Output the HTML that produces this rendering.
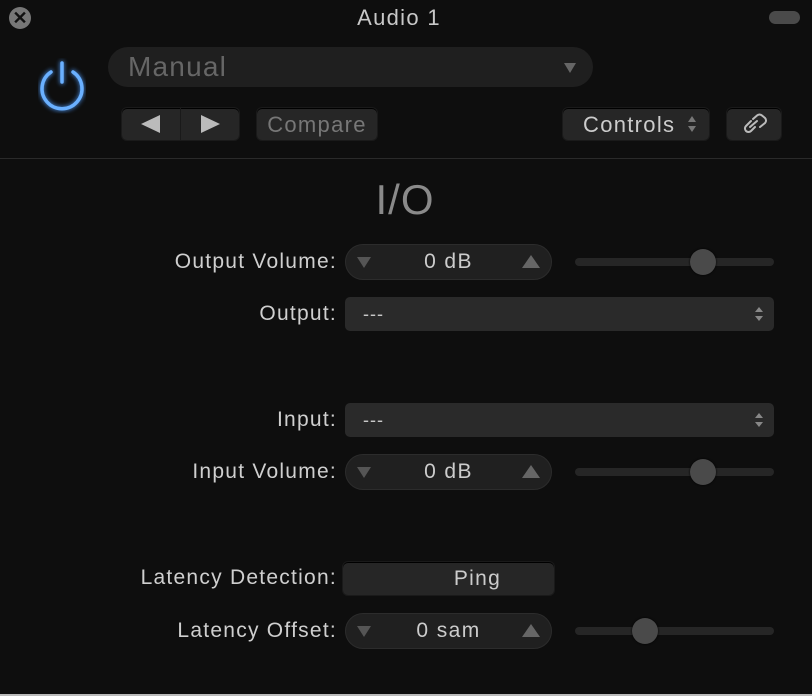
<!DOCTYPE html><html><head><style>
body{margin:0;width:812px;height:696px;background:#0e0e0e;font-family:"Liberation Sans",sans-serif;overflow:hidden;position:relative;letter-spacing:1px}
.a{position:absolute}
.lbl{position:absolute;right:476px;color:#cfcfcf;font-size:21px;line-height:24px;white-space:nowrap;letter-spacing:1.25px;margin-right:-1px}
.btn{position:absolute;background:#262626;border-radius:5px;box-shadow:0 1px 0 #000 inset,0 0 0 1px #1a1a1a}
.step{position:absolute;left:345px;width:207px;height:36px;background:#202020;border-radius:18px;border:1px solid #2c2c2c;box-sizing:border-box;color:#ccc;font-size:21px;text-align:center;line-height:34px;letter-spacing:1.4px}
.step .d{position:absolute;left:11px;top:12px;border-left:7px solid transparent;border-right:7px solid transparent;border-top:11px solid #555}
.step .u{position:absolute;right:11px;top:10px;border-left:9px solid transparent;border-right:9px solid transparent;border-bottom:13px solid #666}
.track{position:absolute;left:575px;width:199px;height:8px;background:#262626;border-radius:4px}
.knob{position:absolute;width:26px;height:26px;border-radius:50%;background:#4a4a4a;box-shadow:0 0 2px #000}
.pop{position:absolute;left:345px;width:429px;height:34px;background:#2a2a2a;border-radius:5px;color:#c8c8c8;font-size:18px;line-height:34px;padding-left:18px;box-sizing:border-box}
.ud{position:absolute;right:10px;top:9px;width:10px}
</style></head><body>
<div class="a" style="left:9px;top:7px;width:22px;height:22px;border-radius:50%;background:#777;color:#111;font-size:18px;font-weight:bold;text-align:center;line-height:22px;letter-spacing:0">✕</div>
<div class="a" style="left:0;width:798px;top:5px;text-align:center;color:#c8c8c8;font-size:22px;line-height:26px;letter-spacing:1.3px">Audio 1</div>
<div class="a" style="left:769px;top:11px;width:31px;height:13px;border-radius:7px;background:#4a4a4a"></div>
<svg class="a" style="left:34px;top:58px" width="56" height="58" viewBox="0 0 56 58"><defs><filter id="g"><feGaussianBlur stdDeviation="2"/></filter></defs><g stroke="#4f9dff" stroke-width="5" fill="none" stroke-linecap="round" filter="url(#g)" opacity=".7"><path d="M17 14A20 20 0 1 0 39 14"/><path d="M28 5V24"/></g><g stroke="#6ab0ff" stroke-width="3.5" fill="none" stroke-linecap="round"><path d="M17 14A20 20 0 1 0 39 14"/><path d="M28 5V24"/></g></svg>
<div class="a" style="left:108px;top:47px;width:485px;height:40px;border-radius:20px;background:#1f1f1f;color:#666;font-size:28px;line-height:40px;padding-left:20px;box-sizing:border-box;letter-spacing:1.2px">Manual</div>
<div class="a" style="left:564px;top:63px;border-left:6px solid transparent;border-right:6px solid transparent;border-top:10px solid #666"></div>
<div class="btn" style="left:122px;top:108px;width:117px;height:32px"></div>
<div class="a" style="left:180px;top:108px;width:1px;height:32px;background:#1a1a1a"></div>
<div class="a" style="left:141px;top:115px;border-top:9px solid transparent;border-bottom:9px solid transparent;border-right:19px solid #bbb"></div>
<div class="a" style="left:201px;top:115px;border-top:9px solid transparent;border-bottom:9px solid transparent;border-left:19px solid #bbb"></div>
<div class="btn" style="left:257px;top:108px;width:120px;height:32px;color:#777;font-size:22px;text-align:center;line-height:33px;letter-spacing:1.3px">Compare</div>
<div class="btn" style="left:563px;top:108px;width:146px;height:32px;color:#ccc;font-size:22px;line-height:33px;padding-left:20px;box-sizing:border-box;letter-spacing:1.3px">Controls</div>
<svg class="a" style="left:687px;top:115px" width="10" height="19"><path d="M1 7L5 1L9 7Z" fill="#777"/><path d="M1 11L5 17L9 11Z" fill="#777"/></svg>
<div class="btn" style="left:727px;top:108px;width:54px;height:32px"></div>
<svg class="a" style="left:738px;top:112px" width="32" height="24" viewBox="0 0 32 24" fill="none" stroke="#bbb" stroke-width="2" stroke-linecap="round"><path d="M13 9L8 14A3.5 3.5 0 0 0 13 19L17 15"/><path d="M15 7L19 3.5A3.5 3.5 0 0 1 24 3.5L27 6A3.5 3.5 0 0 1 27 11L22 15"/><path d="M12 15L19 9"/></svg>
<div class="a" style="left:0;top:158px;width:812px;height:1px;background:#2a2a2a"></div>
<div class="a" style="left:0;width:810px;top:176px;text-align:center;color:#8a8a8a;font-size:42px;font-weight:300;line-height:48px">I/O</div>

<div class="lbl" style="top:250px">Output Volume:</div>
<div class="step" style="top:244px"><span class="d"></span>0 dB<span class="u"></span></div>
<div class="track" style="top:258px"></div><div class="knob" style="left:690px;top:249px"></div>

<div class="lbl" style="top:302px">Output:</div>
<div class="pop" style="top:297px">---<svg class="ud" height="17"><path d="M1 6L5 1L9 6Z" fill="#888"/><path d="M1 10L5 15L9 10Z" fill="#888"/></svg></div>

<div class="lbl" style="top:408px">Input:</div>
<div class="pop" style="top:403px">---<svg class="ud" height="17"><path d="M1 6L5 1L9 6Z" fill="#888"/><path d="M1 10L5 15L9 10Z" fill="#888"/></svg></div>

<div class="lbl" style="top:460px">Input Volume:</div>
<div class="step" style="top:454px"><span class="d"></span>0 dB<span class="u"></span></div>
<div class="track" style="top:468px"></div><div class="knob" style="left:690px;top:459px"></div>

<div class="lbl" style="top:566px">Latency Detection:</div>
<div class="btn" style="left:343px;top:562px;width:211px;height:33px;color:#ccc;font-size:21px;text-align:center;line-height:33px;letter-spacing:1.3px;padding-left:58px;box-sizing:border-box">Ping</div>

<div class="lbl" style="top:619px">Latency Offset:</div>
<div class="step" style="top:613px"><span class="d"></span>0 sam<span class="u"></span></div>
<div class="track" style="top:627px"></div><div class="knob" style="left:632px;top:618px"></div>

<div class="a" style="left:0;top:694px;width:812px;height:2px;background:#bbb"></div>
</body></html>
